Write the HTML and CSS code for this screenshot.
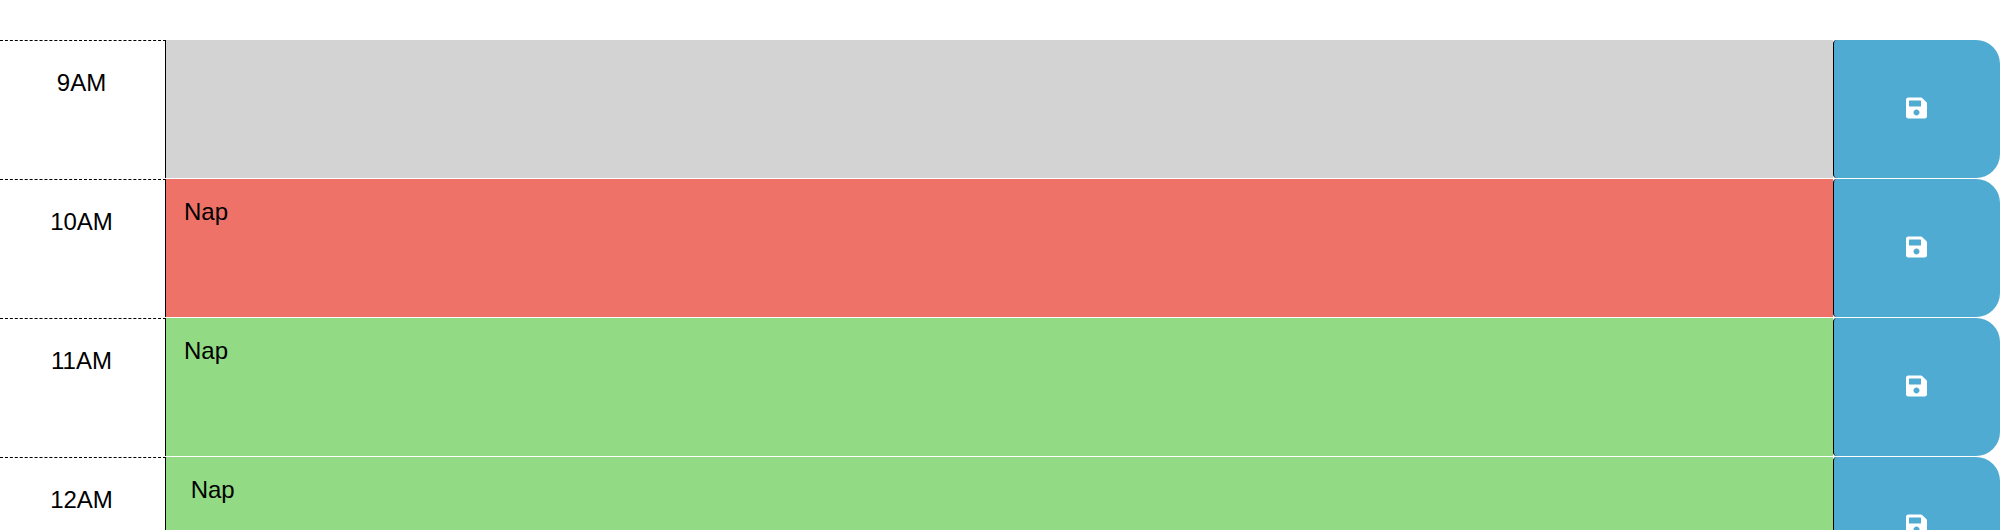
FILE: index.html
```html
<!DOCTYPE html>
<html lang="en">
<head>
<meta charset="utf-8">
<title>Work Day Scheduler</title>
<link rel="stylesheet" href="styles.css">
</head>
<body>
<svg class="sprite" aria-hidden="true">
  <symbol id="save" viewBox="0 0 448 512">
    <path d="M433.941 129.941l-83.882-83.882A48 48 0 0 0 316.118 32H48C21.49 32 0 53.49 0 80v352c0 26.51 21.49 48 48 48h352c26.51 0 48-21.49 48-48V163.882a48 48 0 0 0-14.059-33.941zM224 416c-35.346 0-64-28.654-64-64 0-35.346 28.654-64 64-64s64 28.654 64 64c0 35.346-28.654 64-64 64zm96-304.52V212c0 6.627-5.373 12-12 12H76c-6.627 0-12-5.373-12-12V108c0-6.627 5.373-12 12-12h228.52c3.183 0 6.235 1.264 8.485 3.515l3.48 3.48A11.996 11.996 0 0 1 320 111.48z"/>
  </symbol>
</svg>
<main class="schedule">
  <div class="time-block">
    <label class="hour" for="h9">9AM</label>
    <textarea class="description past" id="h9"></textarea>
    <button class="save-btn" type="button" aria-label="Save 9AM"><svg class="icon"><use href="#save"/></svg></button>
  </div>
  <div class="time-block">
    <label class="hour" for="h10">10AM</label>
    <textarea class="description present" id="h10">Nap</textarea>
    <button class="save-btn" type="button" aria-label="Save 10AM"><svg class="icon"><use href="#save"/></svg></button>
  </div>
  <div class="time-block">
    <label class="hour" for="h11">11AM</label>
    <textarea class="description future" id="h11">Nap</textarea>
    <button class="save-btn" type="button" aria-label="Save 11AM"><svg class="icon"><use href="#save"/></svg></button>
  </div>
  <div class="time-block">
    <label class="hour" for="h12">12AM</label>
    <textarea class="description future" id="h12"> Nap</textarea>
    <button class="save-btn" type="button" aria-label="Save 12AM"><svg class="icon"><use href="#save"/></svg></button>
  </div>
</main>
</body>
</html>
```
FILE: styles.css
```css
* {
  box-sizing: border-box;
}

html {
  scrollbar-width: none;
}

body {
  margin: 0;
  background: #fff;
  color: #000;
  font-family: "Liberation Sans", Arial, sans-serif;
  font-size: 24px;
  line-height: 36px;
}

.sprite {
  display: none;
}

.schedule {
  padding: 40px 2px 0 0;
}

.time-block {
  display: grid;
  grid-template-columns: 166px 1fr 167px;
  grid-auto-rows: 138px;
  padding-bottom: 1px;
}

.hour {
  padding: 24px 2px 0 0;
  border-top: 1px dashed #000;
  border-right: 1px solid #000;
  text-align: center;
}

.description {
  display: block;
  width: 100%;
  height: 100%;
  margin: 0;
  padding: 15px 18px;
  border: 0;
  outline: 0;
  resize: none;
  color: #000;
  font: inherit;
}

.past {
  background: #d3d3d3;
}

.present {
  background: #ee7268;
}

.future {
  background: #92da83;
}

.save-btn {
  display: flex;
  align-items: center;
  justify-content: center;
  margin: 0;
  padding: 0 2px 2px 0;
  border: 0;
  border-left: 1px solid #000;
  border-radius: 4px 24px 24px 4px;
  background: #4fabd1;
  color: #fff;
}

.icon {
  width: 21px;
  height: 24px;
  fill: currentColor;
}
```
